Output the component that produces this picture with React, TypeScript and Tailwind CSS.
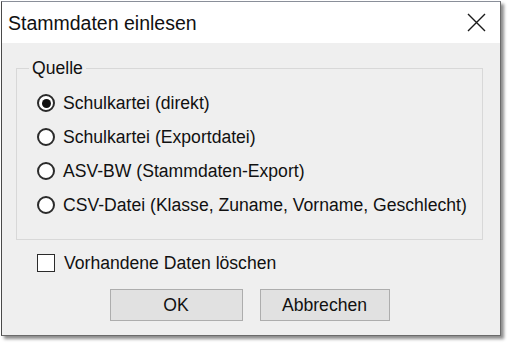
import React from "react";

const font = { fontFamily: '"Liberation Sans", Arial, sans-serif' };

function Radio({ checked, label }: { checked?: boolean; label: string }) {
  return (
    <div className="flex h-[34px] items-center">
      <div className="flex h-[18px] w-[18px] items-center justify-center rounded-full border-[2px] border-[#2b2b2b] bg-white">
        {checked && <div className="h-[9px] w-[9px] rounded-full bg-[#111]" />}
      </div>
      <span className="ml-[8px] text-[17.6px] leading-[20px] text-[#111]">{label}</span>
    </div>
  );
}

export default function App() {
  return (
    <div className="h-[343px] w-[508px] bg-white pl-[1px] pt-[1px]" style={font}>
      <div className="flex h-[335px] w-[500px] flex-col border border-l-[#4a4a4a] border-t-[#8a8f99] border-r-[#6b6b6b] border-b-[#6b6b6b] shadow-[3px_3px_3px_rgba(0,0,0,0.45)]">
        <div className="flex h-[41px] items-center justify-between bg-white pl-[6px] pr-[14px]">
          <span className="text-[19.5px] leading-[24px] text-[#111]">Stammdaten einlesen</span>
          <svg width="19" height="19" viewBox="0 0 19 19">
            <path d="M1 1 L18 18 M18 1 L1 18" stroke="#1a1a1a" strokeWidth="1.4" fill="none" />
          </svg>
        </div>
        <div className="flex flex-1 flex-col bg-[#efefef] pl-[14px] pr-[17px] pt-[15px]">
          <fieldset className="h-[182px] border border-[#d8d8d8] pb-[16px] pl-[20px]">
            <legend className="-ml-[8px] px-[3px] text-[17.6px] leading-[20px] text-[#111]">Quelle</legend>
            <div className="mt-[8px] flex flex-col">
              <Radio checked label="Schulkartei (direkt)" />
              <Radio label="Schulkartei (Exportdatei)" />
              <Radio label="ASV-BW (Stammdaten-Export)" />
              <Radio label="CSV-Datei (Klasse, Zuname, Vorname, Geschlecht)" />
            </div>
          </fieldset>
          <div className="ml-[21px] mt-[11px] flex h-[24px] items-center">
            <div className="h-[18px] w-[18px] border-[1.5px] border-[#2b2b2b] bg-white" />
            <span className="ml-[9px] text-[17.6px] leading-[20px] text-[#111]">Vorhandene Daten löschen</span>
          </div>
          <div className="mt-[14px] flex justify-center gap-[17px]">
            <button className="flex h-[32px] w-[133px] items-center justify-center border border-[#adadad] bg-[#e1e1e1] text-[17.6px] text-[#111]">
              OK
            </button>
            <button className="flex h-[32px] w-[130px] items-center justify-center border border-[#adadad] bg-[#e1e1e1] text-[17.6px] text-[#111]">
              Abbrechen
            </button>
          </div>
        </div>
      </div>
    </div>
  );
}
